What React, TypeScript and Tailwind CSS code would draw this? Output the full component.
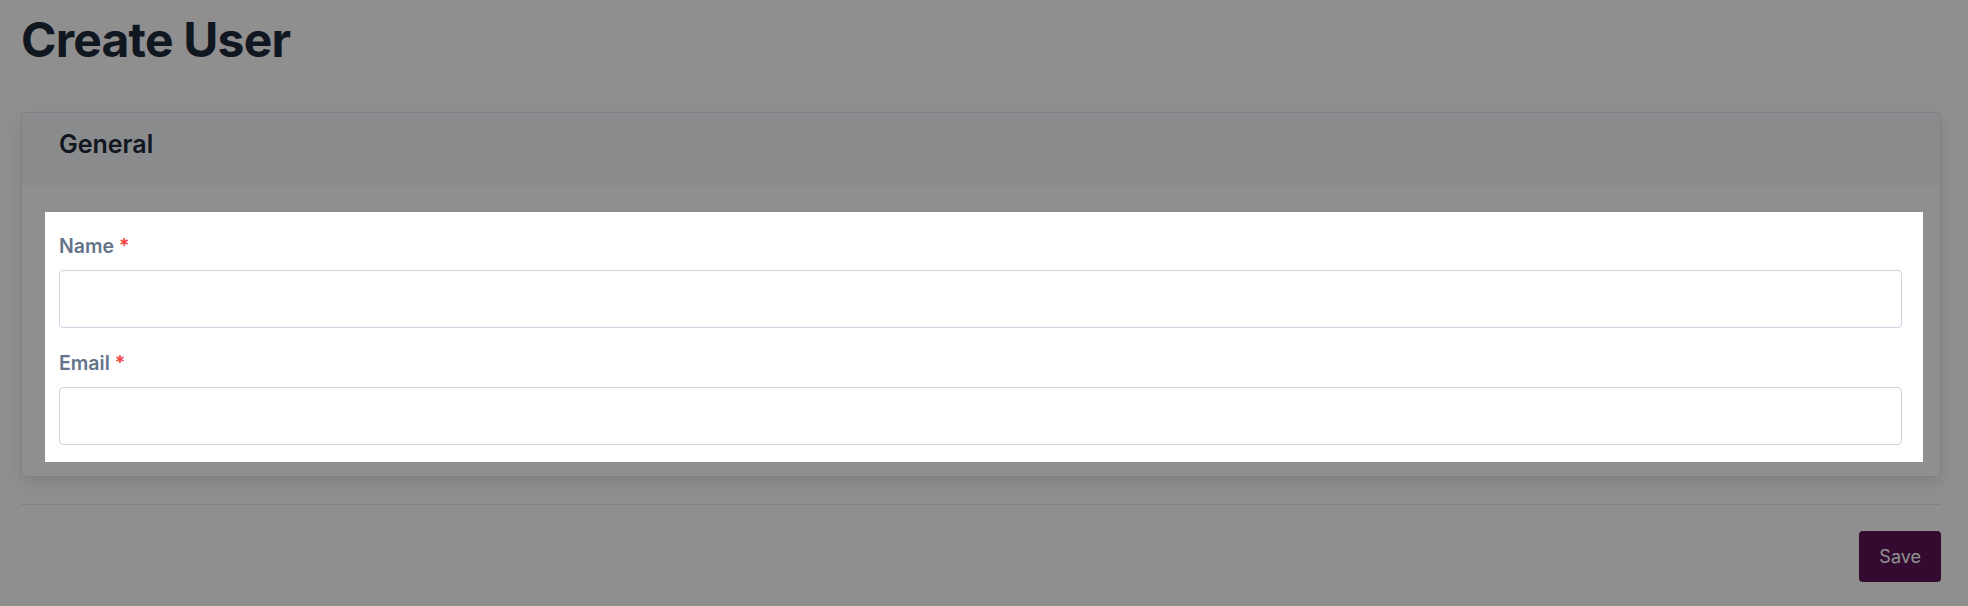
import React from 'react';

const fields = [
  { label: 'Name', type: 'text' },
  { label: 'Email', type: 'email' },
];

const App = () => {
  return (
    <div className="min-h-screen bg-white pl-[21px] pr-[27px] pt-[16px] font-['Inter',sans-serif]">
      <h1 className="text-[48px] leading-[48px] font-bold text-[#1e293b] tracking-[-0.8px]">Create User</h1>

      <div className="mt-[48px] border border-[#e2e6ec] rounded-[4px] bg-white shadow-[0_6px_16px_rgba(0,0,0,0.10)]">
        <div className="h-[73px] pl-[37px] pt-[15px] bg-[#f6f8fb] rounded-t-[4px]">
          <h2 className="text-[25px] leading-[32px] font-semibold text-[#1e293b]">General</h2>
        </div>

        <div className="pl-[23px] pr-[17px] pt-[26px] pb-[14px]">
          {/* highlighted step */}
          <div className="relative z-20 bg-white pl-[14px] pr-[21px] pt-[20px] pb-[17px]">
            {fields.map((f, i) => (
              <div key={f.label} className={i > 0 ? 'mt-[21px]' : ''}>
                <label className="block text-[19.5px] leading-[28px] font-semibold text-[#64748b]">
                  {f.label} <span className="text-[#ef4444]">*</span>
                </label>
                <input
                  type={f.type}
                  className="mt-[10px] block w-full h-[58px] border border-[#cbd5e1] rounded-[4px] px-3 outline-none"
                />
              </div>
            ))}
          </div>
        </div>
      </div>

      <div className="mt-[27px] border-t border-[#e2e8f0]" />

      <div className="flex justify-end pt-[26px]">
        <button
          type="button"
          className="h-[51px] px-[20px] rounded-[4px] bg-[#5c1257] text-white text-[18px]"
        >
          Save
        </button>
      </div>

      {/* tour overlay */}
      <div className="fixed inset-0 z-10 bg-black/[0.44]" />
    </div>
  );
};

export default App;
